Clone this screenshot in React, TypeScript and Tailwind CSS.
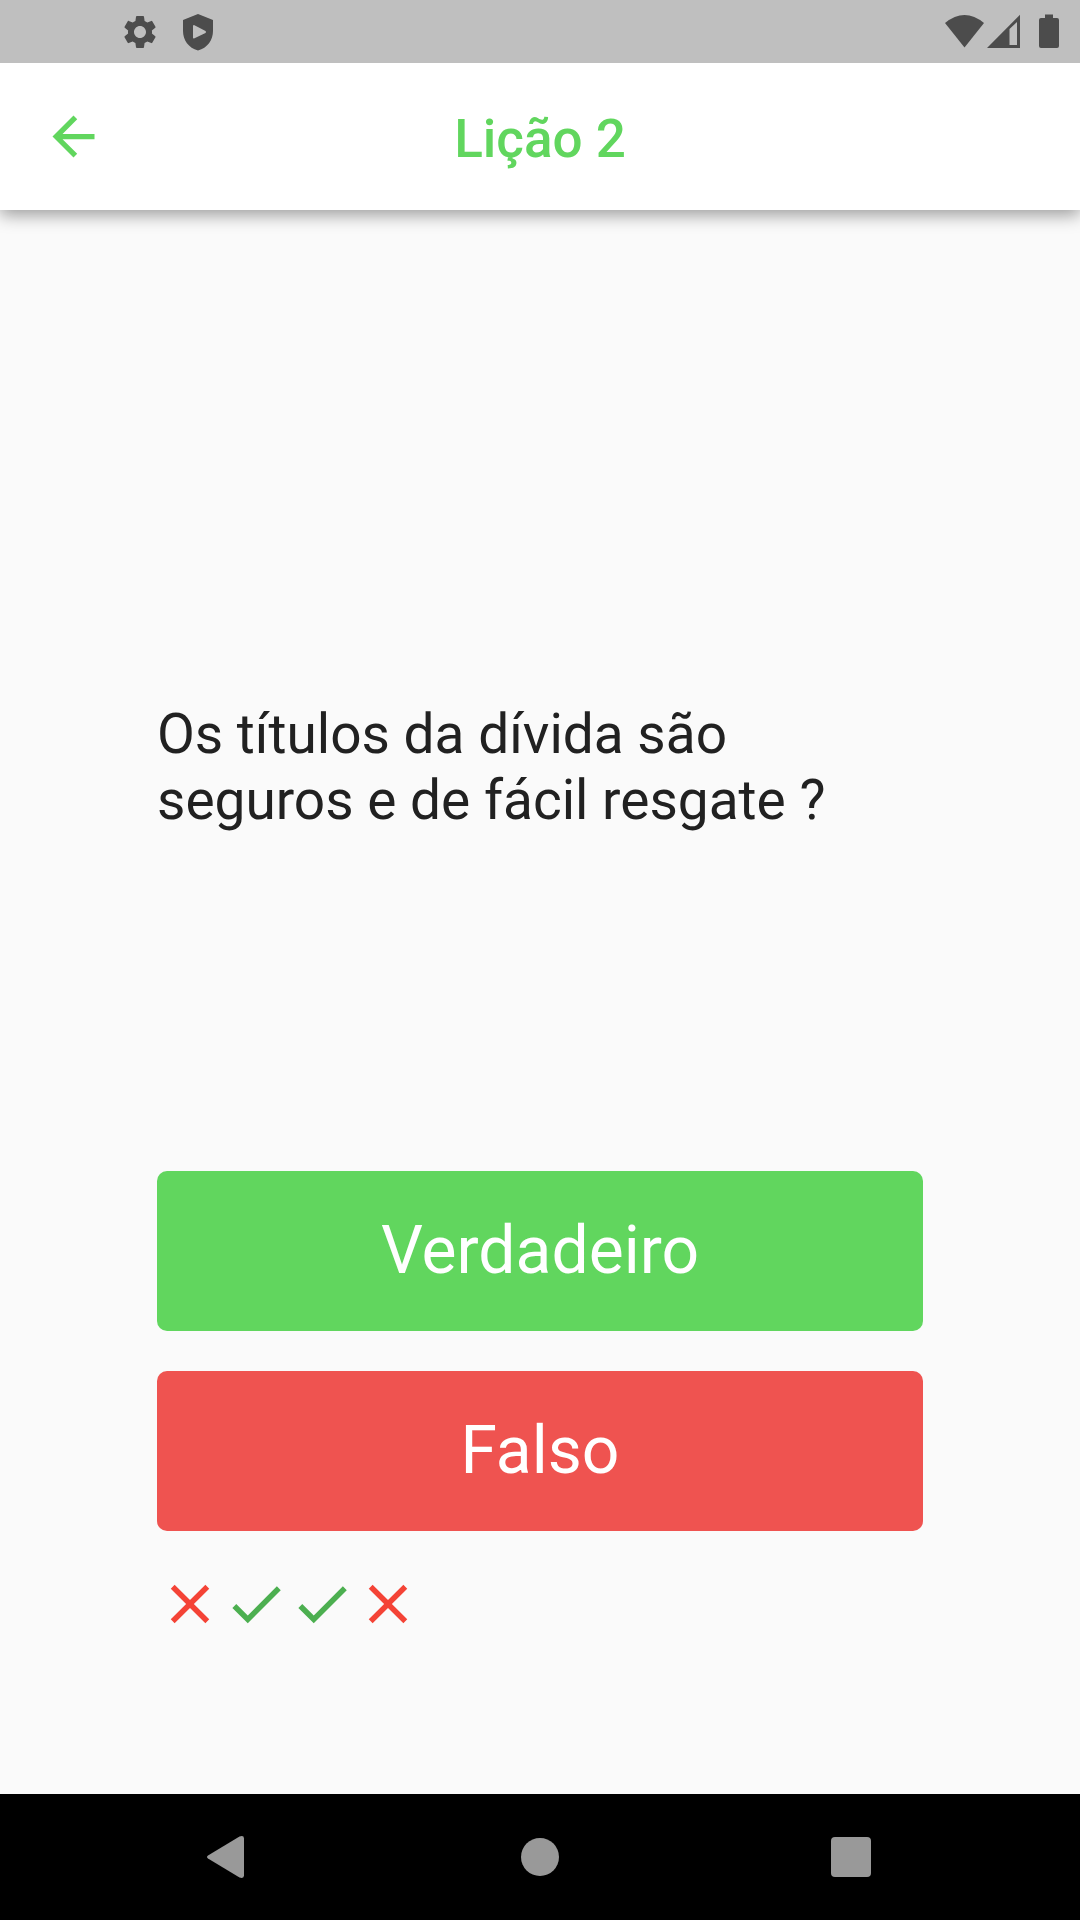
import React from "react";
import { MdArrowBack, MdCheck, MdClose, MdSettings } from "react-icons/md";

const answers = [false, true, true, false];

function StatusBar() {
  return (
    <div className="relative z-20 flex h-[63px] shrink-0 items-center justify-between bg-[#bfbfbf] pr-[19px] pl-[120px] text-[#4c4c4c]">
      <div className="flex items-center gap-[18px]">
        <MdSettings size={40} />
        <svg width="40" height="40" viewBox="0 0 40 40" fill="currentColor" aria-hidden="true">
          <path
            fillRule="evenodd"
            d="M20 2 35 8V19C35 28 29.500 36 20 38.500C10.500 36 5 28 5 19V8ZM15 14.500V25.500Q15 27 16.500 26.300L27.500 20.900Q28.600 20 27.500 19.100L16.500 13.200Q15 12.700 15 14.500Z"
          />
        </svg>
      </div>
      <svg width="116" height="36" viewBox="0 0 116 36" fill="currentColor" aria-hidden="true">
        <path d="M0 9Q19.500 -7 39 9L19.500 33.500Z" />
        <path fillRule="evenodd" d="M42 34 75 .8V34ZM64.500 15V31H72V8Z" />
        <path d="M100 .5H108V4H112Q114 4 114 6V32Q114 34 112 34H96Q94 34 94 32V6Q94 4 96 4H100Z" />
      </svg>
    </div>
  );
}

function NavBar() {
  return (
    <nav className="grid h-[126px] shrink-0 grid-cols-3 bg-black px-[73px] text-[#999999]">
      <button type="button" aria-label="Voltar" className="flex items-center justify-center">
        <svg width="44" height="44" viewBox="0 0 44 44" fill="currentColor">
          <path d="M1 20.500 32.500 1.500Q37 0 37 3.500V40.500Q37 44 32.500 42.500L1 23.500Q-1 22 1 20.500Z" />
        </svg>
      </button>
      <button type="button" aria-label="Início" className="flex items-center justify-center">
        <span className="size-[38px] rounded-full bg-[#999999]" />
      </button>
      <button type="button" aria-label="Recentes" className="flex items-center justify-center">
        <span className="size-10 rounded bg-[#999999]" />
      </button>
    </nav>
  );
}

export default function App() {
  return (
    <div className="flex min-h-screen flex-col bg-[#fafafa] font-['Roboto',sans-serif] text-[#212121]">
      <StatusBar />
      <header className="relative z-10 grid h-[147px] shrink-0 grid-cols-[1fr_auto_1fr] items-center bg-white px-[42px] text-[#61d65e] shadow-[0_5px_16px_rgba(0,0,0,0.38)]">
        <button type="button" aria-label="Voltar" className="justify-self-start">
          <MdArrowBack size={63} />
        </button>
        <h1 className="pt-1 text-[53px] leading-[60px] font-medium">Lição 2</h1>
      </header>
      <main className="flex flex-1 flex-col px-[157px] pt-[153px] pb-[157px]">
        <div className="flex flex-1 items-center">
          <p className="text-[55px] leading-[66px]">Os títulos da dívida são seguros e de fácil resgate ?</p>
        </div>
        <div className="flex flex-col gap-10 text-[66px] leading-[76px] text-white">
          <button type="button" className="h-40 rounded-[10px] bg-[#61d65e]">
            Verdadeiro
          </button>
          <button type="button" className="h-40 rounded-[10px] bg-[#ef5350]">
            Falso
          </button>
        </div>
        <div className="mt-10 flex">
          {answers.map((correct, i) =>
            correct ? (
              <MdCheck key={i} size={66} className="text-[#4caf50]" title="Certo" />
            ) : (
              <MdClose key={i} size={66} className="text-[#f44336]" title="Errado" />
            ),
          )}
        </div>
      </main>
      <NavBar />
    </div>
  );
}
